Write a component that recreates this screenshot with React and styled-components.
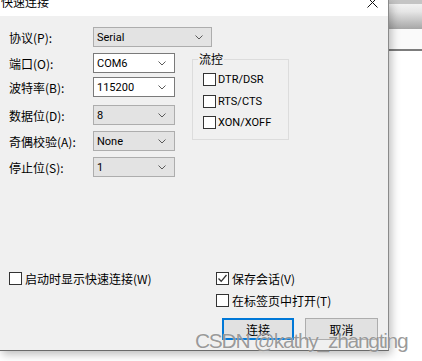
import React from "react";
import styled, { createGlobalStyle } from "styled-components";

const Global = createGlobalStyle`
  html, body { margin: 0; padding: 0; background: #ffffff; overflow: hidden; }
  #root { width: 422px; height: 361px; }
  * { box-sizing: border-box; }
`;

const CJK = `"Noto Sans CJK SC", "Noto Sans", sans-serif`;
const UI = `Roboto, "Noto Sans", "Noto Sans CJK SC", sans-serif`;

const Screen = styled.div`
  position: relative;
  width: 422px;
  height: 361px;
  display: flex;
  align-items: flex-start;
  background: #ffffff;
  overflow: hidden;
`;

const Dialog = styled.div`
  position: relative;
  z-index: 1;
  width: 389px;
  height: 351px;
  flex: none;
  display: flex;
  flex-direction: column;
  background: #f0f0f0;
  border-right: 1px solid #8a8a8a;
  border-bottom: 1px solid #6a6a6a;
  box-shadow: 2px 3px 9px rgba(0, 0, 0, 0.28);
  font-family: ${CJK};
  font-size: 12px;
  color: #000;
`;

const TitleBar = styled.div`
  height: 16px;
  flex: none;
  background: #ffffff;
  display: flex;
  justify-content: space-between;
  align-items: flex-end;
  padding: 0 10px 0 1px;
  overflow: hidden;
`;

const TitleText = styled.div`
  font-family: ${CJK};
  font-size: 12px;
  line-height: 17px;
  margin-bottom: 6px;
  color: #000;
`;

const CloseIcon = styled.svg`
  width: 11px;
  height: 11px;
  margin-bottom: 8px;
  display: block;
`;

const Body = styled.div`
  padding: 11px 0 0 9px;
  display: flex;
  flex-direction: column;
`;

const FieldRow = styled.div`
  display: flex;
  align-items: center;
  height: 20px;
  margin-top: ${(p) => p.$mt || 0}px;
`;

const Label = styled.div`
  width: 84px;
  flex: none;
  font-family: ${CJK};
  font-size: 12px;
  line-height: 20px;
  padding-top: 1px;
  white-space: nowrap;
`;

const Select = styled.div`
  width: ${(p) => p.$w}px;
  height: 20px;
  flex: none;
  display: flex;
  align-items: center;
  justify-content: space-between;
  padding: 0 8px 0 3px;
  background: ${(p) => (p.$edit ? "#ffffff" : "#e3e3e3")};
  border: 1px solid ${(p) => (p.$edit ? "#7a7a7a" : "#adadad")};
  font-family: ${UI};
  font-size: 11px;
  color: #000;
`;

const Chevron = styled.svg`
  width: 8px;
  height: 5px;
  display: block;
  flex: none;
`;

const Middle = styled.div`
  display: flex;
  align-items: flex-start;
  margin-top: 6px;
`;

const Column = styled.div`
  display: flex;
  flex-direction: column;
`;

const GroupBox = styled.div`
  position: relative;
  width: 97px;
  height: 81px;
  margin: 6px 0 0 17px;
  border: 1px solid #dcdcdc;
  padding: 11px 0 0 10px;
  display: flex;
  flex-direction: column;
`;

const Legend = styled.div`
  position: absolute;
  top: -9px;
  left: 5px;
  padding: 0 1px;
  background: #f0f0f0;
  font-family: ${CJK};
  font-size: 12px;
  line-height: 16px;
`;

const CheckRow = styled.div`
  display: flex;
  align-items: center;
  height: 16px;
  margin-top: ${(p) => p.$mt || 0}px;
  font-family: ${(p) => (p.$cjk ? CJK : UI)};
  font-size: ${(p) => (p.$cjk ? 12 : 11)}px;
  white-space: nowrap;
`;

const Box = styled.div`
  width: 13px;
  height: 13px;
  flex: none;
  border: 1px solid #333333;
  background: #ffffff;
  margin-right: ${(p) => p.$gap || 3}px;
  display: flex;
  align-items: center;
  justify-content: center;
`;

const Bottom = styled.div`
  display: flex;
  align-items: flex-start;
  margin-top: 93px;
`;

const BottomLeft = styled.div`
  width: 207px;
  flex: none;
`;

const BottomRight = styled.div`
  display: flex;
  flex-direction: column;
`;

const Buttons = styled.div`
  display: flex;
  gap: 11px;
  margin: 10px 0 0 6px;
`;

const Button = styled.div`
  width: ${(p) => p.$w}px;
  height: 22px;
  display: flex;
  align-items: center;
  justify-content: center;
  background: #e1e1e1;
  border: ${(p) => (p.$primary ? "2px solid #0078d7" : "1px solid #adadad")};
  font-family: ${CJK};
  font-size: 12px;
  color: #000;
`;

const Behind = styled.div`
  flex: 1;
  height: 361px;
  display: flex;
  flex-direction: column;
`;

const BehindTop = styled.div`
  height: 4px;
  background: #c4c4c4;
`;

const BehindBar = styled.div`
  height: 25px;
  background: linear-gradient(#f2f2f2 0%, #e6e6e6 30%, #a6a6a6 100%);
`;

const BehindStrip = styled.div`
  height: 22px;
  background: #fafafa;
  border-bottom: 2px solid #7c7c7c;
`;

const BehindRest = styled.div`
  flex: 1;
  background: #ffffff;
`;

const Watermark = styled.div`
  position: absolute;
  z-index: 2;
  left: 195px;
  top: 329px;
  font-family: "Liberation Sans", Arial, sans-serif;
  font-size: 21px;
  letter-spacing: -1.3px;
  line-height: 24px;
  color: rgba(110, 110, 110, 0.7);
  text-shadow: 0 0 1px rgba(255, 255, 255, 0.9);
  white-space: nowrap;
  pointer-events: none;
`;

const ChevronDown = () => (
  <Chevron viewBox="0 0 8 5">
    <polyline points="0.5,0.5 4,4 7.5,0.5" fill="none" stroke="#5a5a5a" strokeWidth="1" />
  </Chevron>
);

const Check = ({ checked, gap, children, mt, cjk }) => (
  <CheckRow $mt={mt} $cjk={cjk}>
    <Box $gap={gap}>
      {checked && (
        <svg width="11" height="11" viewBox="0 0 11 11">
          <polyline points="1.5,5.5 4.2,8.3 9.5,2" fill="none" stroke="#333" strokeWidth="1.3" />
        </svg>
      )}
    </Box>
    {children}
  </CheckRow>
);

const fields = [
  { label: "端口(O):", value: "COM6", edit: true, mt: 0 },
  { label: "波特率(B):", value: "115200", edit: true, mt: 4 },
  { label: "数据位(D):", value: "8", mt: 8 },
  { label: "奇偶校验(A):", value: "None", mt: 6 },
  { label: "停止位(S):", value: "1", mt: 6 },
];

export default function App() {
  return (
    <>
      <Global />
      <Screen>
        <Dialog>
          <TitleBar>
            <TitleText>快速连接</TitleText>
            <CloseIcon viewBox="0 0 11 11">
              <path d="M0.5 0.5 L10.5 10.5 M10.5 0.5 L0.5 10.5" stroke="#111" strokeWidth="1" />
            </CloseIcon>
          </TitleBar>
          <Body>
            <FieldRow>
              <Label>协议(P):</Label>
              <Select $w={119}>
                <span>Serial</span>
                <ChevronDown />
              </Select>
            </FieldRow>
            <Middle>
              <Column>
                {fields.map((f) => (
                  <FieldRow key={f.label} $mt={f.mt}>
                    <Label>{f.label}</Label>
                    <Select $w={82} $edit={f.edit}>
                      <span>{f.value}</span>
                      <ChevronDown />
                    </Select>
                  </FieldRow>
                ))}
              </Column>
              <GroupBox>
                <Legend>流控</Legend>
                <Check gap={2}>DTR/DSR</Check>
                <Check gap={2} mt={6}>RTS/CTS</Check>
                <Check gap={2} mt={5}>XON/XOFF</Check>
              </GroupBox>
            </Middle>
            <Bottom>
              <BottomLeft>
                <Check cjk>启动时显示快速连接(W)</Check>
              </BottomLeft>
              <BottomRight>
                <Check cjk checked>保存会话(V)</Check>
                <Check cjk mt={6}>在标签页中打开(T)</Check>
                <Buttons>
                  <Button $w={72} $primary>连接</Button>
                  <Button $w={73}>取消</Button>
                </Buttons>
              </BottomRight>
            </Bottom>
          </Body>
        </Dialog>
        <Behind>
          <BehindTop />
          <BehindBar />
          <BehindStrip />
          <BehindRest />
        </Behind>
        <Watermark>CSDN @kathy_zhangting</Watermark>
      </Screen>
    </>
  );
}
